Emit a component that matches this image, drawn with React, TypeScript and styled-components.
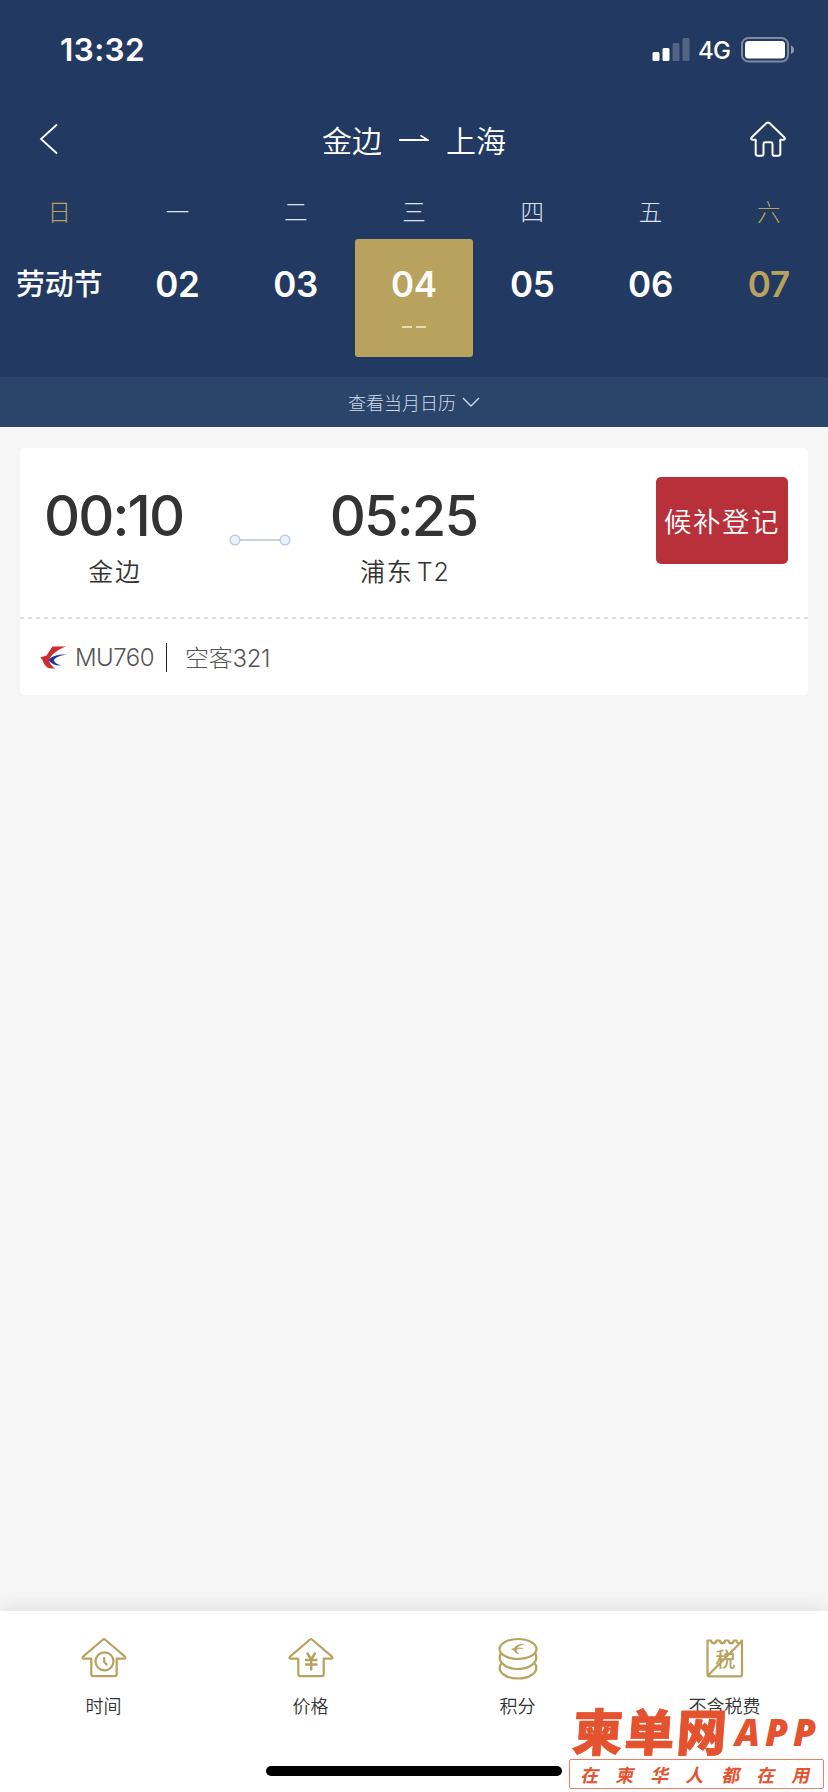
import React from "react";
import styled, { createGlobalStyle, css } from "styled-components";

const navy = "#223961";
const gold = "#b8a25e";
const watermarkRed = "#e4522f";

const GlobalStyle = createGlobalStyle`
  * { box-sizing: border-box; }
  html, body { margin: 0; padding: 0; }
  body {
    background: #f6f6f6;
    font-family: Inter, "Noto Sans CJK SC", sans-serif;
    color: #333;
    overflow: hidden;
  }
  svg { display: block; flex: none; }
`;

const Screen = styled.div`
  position: relative;
  width: 828px;
  height: 1792px;
  display: flex;
  flex-direction: column;
  background: #f6f6f6;
  overflow: hidden;
`;

const Header = styled.header`
  height: 377px;
  background: ${navy};
  color: #fff;
`;

const StatusBar = styled.div`
  height: 98px;
  padding: 1px 33px 0 60px;
  display: flex;
  align-items: center;
  justify-content: space-between;
`;

const Clock = styled.span`
  font-size: 31.5px;
  font-weight: 600;
  letter-spacing: 0.4px;
`;

const StatusIcons = styled.div`
  display: flex;
  align-items: center;
`;

const Network = styled.span`
  width: 33px;
  margin: 2px 10px 0 8px;
  font-size: 24px;
  font-weight: 500;
  line-height: 26px;
  letter-spacing: -0.8px;
  white-space: nowrap;
`;

const NavBar = styled.nav`
  height: 84px;
  padding: 0 42px 2px 39px;
  display: flex;
  align-items: center;
  justify-content: space-between;
`;

const Route = styled.h1`
  margin: 0 0 0 19px;
  display: flex;
  align-items: center;
  gap: 16px;
  font-family: "Noto Sans CJK SC", sans-serif;
  font-size: 30px;
  font-weight: 350;
  line-height: 40px;
`;

const Week = styled.div`
  display: grid;
  grid-template-columns: repeat(7, 1fr);
`;

const WeekDay = styled.div<{ $weekend?: boolean }>`
  height: 57px;
  padding-top: 14px;
  text-align: center;
  font-family: "Noto Sans CJK SC", sans-serif;
  font-size: 23.5px;
  font-weight: 300;
  line-height: 30px;
  color: ${(p) => (p.$weekend ? gold : "#dce3f3")};
`;

const DateCell = styled.div<{ $selected?: boolean; $gold?: boolean; $label?: boolean }>`
  height: 118px;
  padding-top: ${(p) => (p.$label ? 23 : 25)}px;
  display: flex;
  flex-direction: column;
  align-items: center;
  border-radius: 3px;
  background: ${(p) => (p.$selected ? gold : "transparent")};
  color: ${(p) => (p.$gold ? gold : "#fff")};
  font-size: 35px;
  font-weight: 600;
  line-height: 40px;
  letter-spacing: -0.3px;
  ${(p) =>
    p.$label &&
    css`
      font-family: "Noto Sans CJK SC", sans-serif;
      font-size: 29px;
      font-weight: 500;
    `}
`;

const Fare = styled.span`
  display: flex;
  gap: 4px;
  margin-top: 22px;
  &::before,
  &::after {
    content: "";
    width: 10px;
    height: 2px;
    background: #e6dcb5;
  }
`;

const CalendarLink = styled.div`
  height: 50px;
  padding-bottom: 1px;
  display: flex;
  align-items: center;
  justify-content: center;
  gap: 6px;
  background: #2b4469;
  color: #cfdaec;
  font-family: "Noto Sans CJK SC", sans-serif;
  font-size: 18px;
  font-weight: 300;
  line-height: 26px;
`;

const Results = styled.main`
  flex: 1;
  padding: 21px 20px 0;
`;

const Card = styled.article`
  background: #fff;
  border-radius: 4px;
`;

const CardTop = styled.div`
  height: 169px;
  display: flex;
  align-items: flex-start;
  padding: 29px 20px 0 27px;
`;

const Leg = styled.div<{ $width: number }>`
  width: ${(p) => p.$width}px;
  padding-top: 7px;
  text-align: center;
`;

const LegTime = styled.div`
  margin-left: -3px;
  font-size: 56px;
  font-weight: 500;
  line-height: 64px;
  letter-spacing: -1.9px;
  white-space: nowrap;
  font-feature-settings: "calt" 0;
`;

const LegPlace = styled.div`
  margin-top: 8px;
  font-size: 25px;
  font-weight: 350;
  line-height: 32px;
  letter-spacing: 1.8px;
  white-space: nowrap;
`;

const Terminal = styled.span`
  margin-left: 3px;
  letter-spacing: 1px;
`;

const Track = styled.div`
  margin: 57px 40px 0 46px;
`;

const WaitlistButton = styled.button`
  width: 132px;
  height: 87px;
  margin-left: auto;
  padding: 0 0 2px;
  border: 0;
  border-radius: 5px;
  background: #b8313a;
  color: #fff;
  font-family: "Noto Sans CJK SC", sans-serif;
  font-size: 27.5px;
  font-weight: 350;
  letter-spacing: 1.5px;
  white-space: nowrap;
`;

const Divider = styled.div`
  height: 2px;
  background: repeating-linear-gradient(90deg, #dedede 0 4px, transparent 4px 8px);
`;

const CardBottom = styled.div`
  height: 76px;
  padding: 0 20px;
  display: flex;
  align-items: center;
  font-size: 24px;
  font-weight: 300;
  color: #555;
`;

const FlightNo = styled.span`
  width: 82px;
  margin-left: 6px;
  letter-spacing: -0.5px;
`;

const Separator = styled.span`
  width: 1px;
  height: 29px;
  margin: 0 18px 0 9px;
  background: #222;
`;

const Aircraft = styled.span`
  padding-bottom: 2px;
  letter-spacing: -0.3px;
`;

const TabBar = styled.footer`
  height: 181px;
  background: #fff;
  box-shadow: 0 -2px 18px rgba(0, 0, 0, 0.1);
  display: flex;
  flex-direction: column;
  align-items: center;
`;

const Tabs = styled.div`
  width: 100%;
  height: 155px;
  display: grid;
  grid-template-columns: repeat(4, 1fr);
`;

const Tab = styled.div`
  display: flex;
  flex-direction: column;
  align-items: center;
  padding-top: 25px;
  font-family: "Noto Sans CJK SC", sans-serif;
  font-size: 18px;
  font-weight: 350;
  line-height: 26px;
`;

const TabLabel = styled.span`
  margin-top: 12px;
`;

const HomeIndicator = styled.div`
  width: 296px;
  height: 10px;
  border-radius: 5px;
  background: #000;
`;

const Watermark = styled.aside`
  position: absolute;
  left: 568px;
  top: 1703px;
  width: 256px;
  color: ${watermarkRed};
  font-family: "Noto Sans CJK SC", sans-serif;
  font-weight: 900;
`;

const Brand = styled.div`
  height: 56px;
  display: flex;
  align-items: flex-start;
  white-space: nowrap;
`;

const BrandName = styled.span`
  margin-left: 5px;
  width: 158px;
  font-size: 50px;
  line-height: 52px;
  letter-spacing: 2px;
  -webkit-text-stroke: 0.8px ${watermarkRed};
  transform: skewX(-4deg);
`;

const BrandApp = styled.span`
  margin-left: 4px;
  font-family: "Open Sans", sans-serif;
  font-weight: 800;
  font-style: italic;
  font-size: 37px;
  line-height: 57px;
  letter-spacing: 5px;
`;

const Slogan = styled.div`
  height: 30px;
  margin-left: 1px;
  padding: 0 12px 1px;
  display: flex;
  align-items: center;
  justify-content: space-between;
  border: 1px solid #e9806a;
  border-radius: 2px;
  background: #fff;
  font-size: 18px;
  font-weight: 700;
  line-height: 28px;
`;

const SloganChar = styled.span`
  transform: skewX(-12deg);
`;

const SignalIcon = () => (
  <svg width="38" height="24" viewBox="0 0 38 24" fill="#fff">
    <rect x="0.5" y="14" width="7" height="9" rx="1.5" />
    <rect x="10.5" y="10" width="7" height="13" rx="1.5" />
    <rect x="20.5" y="5" width="7" height="18" rx="1.5" opacity="0.22" />
    <rect x="30.5" y="0" width="7" height="23" rx="1.5" opacity="0.22" />
  </svg>
);

const BatteryIcon = () => (
  <svg width="54" height="26" viewBox="0 0 54 26">
    <rect x="1" y="1" width="46" height="23.5" rx="6.5" fill="none" stroke="#fff" strokeOpacity="0.42" strokeWidth="2" />
    <rect x="4" y="4" width="40" height="17.5" rx="3.5" fill="#fff" />
    <path d="M50 8.5c2 .8 3 2.300 3 4.300s-1 3.500-3 4.300z" fill="#fff" opacity="0.5" />
  </svg>
);

const BackIcon = () => (
  <svg width="20" height="32" viewBox="0 0 20 32" fill="none" stroke="#fff" strokeWidth="1.8">
    <path d="M18 1.500 2 16l16 14.500" />
  </svg>
);

const HomeIcon = () => (
  <svg width="36" height="38" viewBox="0 0 36 38" fill="none" stroke="#fff" strokeWidth="2" strokeLinejoin="round">
    <path d="M16.300 3.200 1.800 17.200c-1.200 1.300-.8 2.500.7 2.500h3.200v13.800c0 1.500.8 2.300 2.200 2.300h3.600c1.300 0 2-.8 2-2.100V24.200c0-1.300.7-2 1.900-2h5.200c1.200 0 1.900.7 1.900 2v9.500c0 1.300.7 2.100 2 2.100h3.600c1.400 0 2.200-.8 2.200-2.300V19.700h3.200c1.500 0 1.900-1.200.7-2.500L19.700 3.200c-1-1-2.400-1-3.400 0z" />
  </svg>
);

const RouteArrow = () => (
  <svg width="32" height="12" viewBox="0 0 32 12" fill="#fff">
    <path d="M1 6h25.500l-4.500-3 .8-1.200L31 6.800V8H1z" />
  </svg>
);

const ChevronDown = () => (
  <svg width="18" height="12" viewBox="0 0 18 12" fill="none" stroke="#cfdaec" strokeWidth="1.400">
    <path d="M1 2l8 8 8-8" />
  </svg>
);

const TrackIcon = () => (
  <svg width="62" height="12" viewBox="0 0 62 12">
    <path d="M10 6h42" stroke="#ccd1df" strokeWidth="2" />
    <circle cx="6" cy="6" r="4.900" fill="#e8f2fe" stroke="#b9c8e2" strokeWidth="1.200" />
    <circle cx="56" cy="6" r="4.900" fill="#e8f2fe" stroke="#b9c8e2" strokeWidth="1.200" />
  </svg>
);

const AirlineLogo = () => (
  <svg width="29" height="23" viewBox="0 0 29 23">
    <path d="M26 .5H12.500L6.500 9.500 .3 11.500l2.500 3C4 19 7 22.500 12 22.500h3.500c-3.500-2-5.500-4.500-6.500-8C11 8.500 17 4 26 .5z" fill="#cf2a2c" />
    <path d="M28.500 8.500C19 8 12 9.500 8.500 14c3 4 7 5.800 12.800 5.500-4-1.200-6.500-2.800-7.500-5.300C16 11 20 9.300 28.500 8.500z" fill="#1e3a94" />
  </svg>
);

const tabIconProps = {
  width: 46,
  height: 44,
  viewBox: "0 0 46 44",
  fill: "none",
  stroke: gold,
  strokeWidth: 2.2,
  strokeLinejoin: "round" as const,
  strokeLinecap: "round" as const,
};

const House = () => (
  <path d="M22 3.500 2.300 20.300c-1.300 1.200-.9 2.400.7 2.400h7.300V38c0 1.700.6 2.200 2 2.200h21.400c1.400 0 2-.5 2-2.200V22.700H43c1.600 0 2-1.200.7-2.400L24 3.500q-1-.9-2 0z" />
);

const TimeIcon = () => (
  <svg {...tabIconProps}>
    <House />
    <circle cx="23.500" cy="25.300" r="9" fill="#fff" />
    <path d="M23.200 22v4l2.400 2.400" />
  </svg>
);

const PriceIcon = () => (
  <svg {...tabIconProps}>
    <House />
    <path d="M19.500 17.500l3.700 6 3.700-6M18 24h10.500M18 28.500h10.500M23.200 24v9.500" strokeWidth="2.400" />
  </svg>
);

const PointsIcon = () => (
  <svg {...tabIconProps}>
    <ellipse cx="23" cy="13" rx="18.500" ry="10" />
    <path d="M5.500 18c-3.500 8.500 6 15 17.500 15s21-6.500 17.500-15M5.500 28.500c-3.500 8 6 14 17.500 14s21-6 17.500-14" />
    <path d="M28.500 8.300c-5 0-7.500 1.200-9 3.700l-3 1.200 2.500 1c.8 2 2.500 3.200 4.800 3.600-1.800-1.300-2.500-2.500-2.300-3.800 1.200-1.300 3.500-1.700 6.500-1.500-2.800-.8-4.800-.6-6.500 0 1.500-2.200 3.500-3.300 7-4.200z" fill={gold} strokeWidth="0.600" />
  </svg>
);

const TaxIcon = () => (
  <svg {...tabIconProps}>
    <path d="M5.500 4.500H9c.5 3.600 5 3.600 5.500 0h3.200c.5 3.600 5 3.600 5.500 0h3.200c.5 3.600 5 3.600 5.500 0h2.600c.3 3.600 4.300 3.600 5 0H40v34c0 1.300-.5 1.800-1.800 1.800H7.300c-1.300 0-1.800-.5-1.800-1.800zM6.500 39 39.500 5.500" />
    <text
      x="23.500"
      y="31"
      textAnchor="middle"
      fontFamily="Noto Sans CJK SC, sans-serif"
      fontSize="20"
      fontWeight="500"
      fill={gold}
      stroke="none"
    >
      税
    </text>
  </svg>
);

const weekDays = ["日", "一", "二", "三", "四", "五", "六"];
const dates = ["劳动节", "02", "03", "04", "05", "06", "07"];
const selectedDate = "04";

const tabs = [
  { label: "时间", Icon: TimeIcon },
  { label: "价格", Icon: PriceIcon },
  { label: "积分", Icon: PointsIcon },
  { label: "不含税费", Icon: TaxIcon },
];

export default function App() {
  return (
    <>
      <GlobalStyle />
      <Screen>
        <Header>
          <StatusBar>
            <Clock>13:32</Clock>
            <StatusIcons>
              <SignalIcon />
              <Network>4G</Network>
              <BatteryIcon />
            </StatusIcons>
          </StatusBar>
          <NavBar>
            <BackIcon />
            <Route>
              <span>金边</span>
              <RouteArrow />
              <span>上海</span>
            </Route>
            <HomeIcon />
          </NavBar>
          <Week>
            {weekDays.map((day, i) => (
              <WeekDay key={day} $weekend={i === 0 || i === 6}>
                {day}
              </WeekDay>
            ))}
            {dates.map((date, i) => (
              <DateCell key={date} $selected={date === selectedDate} $gold={i === 6} $label={i === 0}>
                {date}
                {date === selectedDate && <Fare />}
              </DateCell>
            ))}
          </Week>
        </Header>
        <CalendarLink>
          查看当月日历
          <ChevronDown />
        </CalendarLink>
        <Results>
          <Card>
            <CardTop>
              <Leg $width={136}>
                <LegTime>00:10</LegTime>
                <LegPlace>金边</LegPlace>
              </Leg>
              <Track>
                <TrackIcon />
              </Track>
              <Leg $width={148}>
                <LegTime>05:25</LegTime>
                <LegPlace>
                  浦东<Terminal>T2</Terminal>
                </LegPlace>
              </Leg>
              <WaitlistButton>候补登记</WaitlistButton>
            </CardTop>
            <Divider />
            <CardBottom>
              <AirlineLogo />
              <FlightNo>MU760</FlightNo>
              <Separator />
              <Aircraft>空客321</Aircraft>
            </CardBottom>
          </Card>
        </Results>
        <TabBar>
          <Tabs>
            {tabs.map(({ label, Icon }) => (
              <Tab key={label}>
                <Icon />
                <TabLabel>{label}</TabLabel>
              </Tab>
            ))}
          </Tabs>
          <HomeIndicator />
        </TabBar>
        <Watermark>
          <Brand>
            <BrandName>柬单网</BrandName>
            <BrandApp>APP</BrandApp>
          </Brand>
          <Slogan>
            {Array.from("在柬华人都在用").map((char, i) => (
              <SloganChar key={i}>{char}</SloganChar>
            ))}
          </Slogan>
        </Watermark>
      </Screen>
    </>
  );
}
